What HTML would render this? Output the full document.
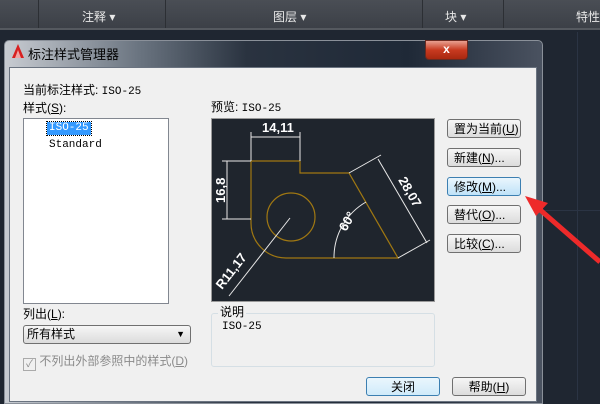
<!DOCTYPE html>
<html><head><meta charset="utf-8"><style>
body{margin:0;width:600px;height:400px;overflow:hidden;background:#1f2631;font-family:"Liberation Sans","Noto Sans CJK SC",sans-serif;font-size:12px;position:relative}
.a{position:absolute}
.top{left:0;top:0;width:600px;height:28px;background:linear-gradient(#4a4e55,#3c4047);border-bottom:2px solid #55595f}
.top span{position:absolute;top:8px;color:#e8e8e8;font-size:12px}
.btn{position:absolute;width:74px;height:19px;border:1px solid #707070;border-radius:3px;background:linear-gradient(#f6f6f6,#dcdcdc);font-size:12px;line-height:19px;padding-left:6px;box-sizing:border-box;color:#000}
.mono{font-family:"Liberation Mono","Noto Sans CJK SC",monospace;font-size:11px}
</style></head><body>
<div class="a top">
<div class="a" style="left:38px;top:0;width:1px;height:28px;background:#2c2f34"></div>
<div class="a" style="left:165px;top:0;width:1px;height:28px;background:#2c2f34"></div>
<div class="a" style="left:422px;top:0;width:1px;height:28px;background:#2c2f34"></div>
<div class="a" style="left:503px;top:0;width:1px;height:28px;background:#2c2f34"></div>
<span style="left:82px">注释 ▾</span><span style="left:273px">图层 ▾</span><span style="left:445px">块 ▾</span><span style="left:576px">特性</span>
</div>
<div class="a" style="left:577px;top:32px;width:1px;height:368px;background:#2b3444"></div>
<div class="a" style="left:540px;top:210px;width:60px;height:1px;background:#2b3444"></div>
<div class="a" style="left:4px;top:40px;width:537px;height:362px;border-radius:5px 5px 0 0;background:linear-gradient(90deg,#c8ccd2 0,#6a7480 25%,#2a3340 45%,#1f2937 75%,#4a5260 100%);border:1px solid #8a9099"></div>
<div class="a" style="left:12px;top:44px;width:12px;height:14px;"><svg width="12" height="14"><polygon points="6,0 12,14 0,14" fill="#d82020"/><polygon points="6,6 9,14 3,14" fill="#fff" opacity=".6"/></svg></div>
<div class="a" style="left:28px;top:44px;color:#000;font-size:13px">标注样式管理器</div>
<div class="a" style="left:425px;top:40px;width:41px;height:18px;border-radius:0 0 4px 4px;background:linear-gradient(#e8a090,#c83a20 50%,#a82810);border:1px solid #6a2a20;color:#fff;font-weight:bold;text-align:center;line-height:17px;font-size:12px">x</div>
<div class="a" style="left:9px;top:67px;width:526px;height:333px;background:#f0f0f0;border:1px solid #6a7380"></div>
<div class="a" style="left:23px;top:81px">当前标注样式: <span class="mono">ISO-25</span></div>
<div class="a" style="left:23px;top:99px">样式(<u>S</u>):</div>
<div class="a" style="left:211px;top:98px">预览: <span class="mono">ISO-25</span></div>
<div class="a" style="left:23px;top:118px;width:144px;height:184px;background:#fff;border:1px solid #828790"></div>
<div class="a mono" style="left:47px;top:122px;height:13px;line-height:13px;background:#3399ff;color:#fff;padding:0 2px;outline:1px dotted #000">ISO-25</div>
<div class="a mono" style="left:49px;top:139px">Standard</div>
<div class="a" style="left:211px;top:118px;width:222px;height:182px;background:#1f252d;border:1px solid #9a9a9a"></div>
<svg class="a" style="left:0;top:0" width="600" height="400">
<g fill="none" stroke="#a07812" stroke-width="1.2">
<path d="M251 161 H300 V173 H349 L398 258 H286 A35 35 0 0 1 251 223 Z"/>
<circle cx="291" cy="217" r="24"/>
</g>
<g stroke="#e8e8e8" stroke-width="1" fill="#e8e8e8">
<path d="M251 132 V161 M300 132 V161 M251 137 H300" fill="none"/>
<path d="M222 161 H251 M222 219 H251 M227 161 V219" fill="none"/>
<path d="M349 173 L381 155 M398 258 L430 240 M378 159 L427 243" fill="none"/>
<path d="M229 296 L290 218" fill="none"/>
<path d="M334 258 A64 64 0 0 1 366 202" fill="none"/>
</g>
<g fill="#fff" font-weight="bold" font-size="13" font-family="Liberation Sans,sans-serif">
<text x="262" y="132">14,11</text>
<text transform="translate(225,203) rotate(-90)">16,8</text>
<text transform="translate(398,180) rotate(60)">28,07</text>
<text transform="translate(346,232) rotate(-60)">60°</text>
<text transform="translate(222,290) rotate(-52)">R11,17</text>
</g>
</svg>
<div class="btn" style="left:447px;top:119px">置为当前(<u>U</u>)</div>
<div class="btn" style="left:447px;top:148px">新建(<u>N</u>)...</div>
<div class="btn" style="left:447px;top:177px;background:linear-gradient(#eaf6fd,#bfe2f8);border-color:#3c7fb1">修改(<u>M</u>)...</div>
<div class="btn" style="left:447px;top:205px">替代(<u>O</u>)...</div>
<div class="btn" style="left:447px;top:234px">比较(<u>C</u>)...</div>
<div class="a" style="left:23px;top:305px">列出(<u>L</u>):</div>
<div class="a" style="left:23px;top:325px;width:168px;height:19px;border:1px solid #707070;border-radius:3px;background:linear-gradient(#f6f6f6,#dcdcdc);box-sizing:border-box;line-height:17px;padding-left:3px">所有样式<span style="position:absolute;right:5px;font-size:9px">▼</span></div>
<div class="a" style="left:23px;top:352px;color:#8a8a8a"><span style="display:inline-block;width:11px;height:11px;border:1px solid #aaa;font-size:10px;line-height:11px;text-align:center;vertical-align:-2px">✓</span> 不列出外部参照中的样式(<u>D</u>)</div>
<div class="a" style="left:211px;top:313px;width:222px;height:52px;border:1px solid #d5dfe5;border-radius:3px"></div>
<div class="a" style="left:218px;top:303px;background:#f0f0f0;padding:0 2px">说明</div>
<div class="a mono" style="left:222px;top:321px">ISO-25</div>
<div class="btn" style="left:366px;top:377px;padding:0;text-align:center;border-color:#3c7fb1;background:linear-gradient(#eaf6fd,#d0ebfa)">关闭</div>
<div class="btn" style="left:452px;top:377px;padding:0;text-align:center">帮助(<u>H</u>)</div>
<svg class="a" style="left:0;top:0" width="600" height="400"><path d="M600 262 L538 208" stroke="#ee2a2a" stroke-width="5"/><polygon points="525,196 548,203 536,216" fill="#ee2a2a"/></svg>
</body></html>
